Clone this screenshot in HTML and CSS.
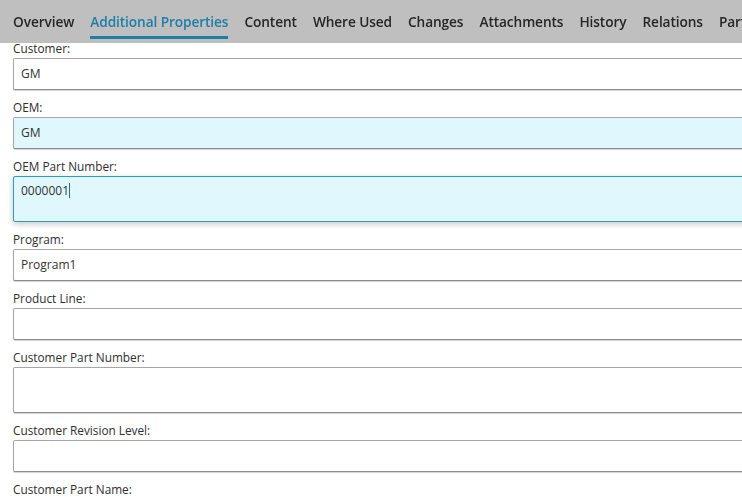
FILE: index.html
```html
<!DOCTYPE html>
<html>
<head>
<meta charset="utf-8">
<link rel="stylesheet" href="styles.css">
</head>
<body>
<nav class="tabs">
  <span class="tab">Overview</span>
  <span class="tab active">Additional Properties</span>
  <span class="tab">Content</span>
  <span class="tab">Where Used</span>
  <span class="tab">Changes</span>
  <span class="tab">Attachments</span>
  <span class="tab">History</span>
  <span class="tab">Relations</span>
  <span class="tab">Parts</span>
</nav>
<main class="form">
  <div class="field">
    <label class="label">Customer:</label>
    <div class="input">GM</div>
  </div>
  <div class="field">
    <label class="label">OEM:</label>
    <div class="input filled">GM</div>
  </div>
  <div class="field">
    <label class="label">OEM Part Number:</label>
    <div class="input area filled focused">0000001<span class="caret"></span></div>
  </div>
  <div class="field">
    <label class="label">Program:</label>
    <div class="input">Program1</div>
  </div>
  <div class="field">
    <label class="label">Product Line:</label>
    <div class="input"></div>
  </div>
  <div class="field">
    <label class="label">Customer Part Number:</label>
    <div class="input area"></div>
  </div>
  <div class="field">
    <label class="label">Customer Revision Level:</label>
    <div class="input"></div>
  </div>
  <div class="field">
    <label class="label">Customer Part Name:</label>
    <div class="input"></div>
  </div>
</main>
</body>
</html>
```
FILE: styles.css
```css
html, body {
  margin: 0;
  padding: 0;
  background: #ffffff;
  overflow: hidden;
  width: 742px;
  height: 497px;
}

body {
  font-family: "Open Sans", "Noto Sans", sans-serif;
  color: #333333;
}

.tabs {
  position: fixed;
  top: 0;
  left: 0;
  right: 0;
  height: 43px;
  background: #bfbfbf;
  display: flex;
  gap: 16px;
  padding-left: 13px;
  white-space: nowrap;
  z-index: 2;
}

.tab {
  font-size: 13.7px;
  font-weight: 600;
  color: #262626;
  line-height: 20px;
  padding-top: 12px;
  height: 24px;
  border-bottom: 3px solid transparent;
  letter-spacing: -0.1px;
}

.tab.active {
  color: #1d7fa6;
  border-bottom-color: #1d7fa6;
  height: 24px;
  padding-top: 12px;
}

.form {
  width: 900px;
  padding: 40px 0 0 13px;
  display: flex;
  flex-direction: column;
  gap: 9px;
}

.field {
  display: flex;
  flex-direction: column;
  gap: 2px;
}

.label {
  font-size: 11.8px;
  line-height: 16px;
  height: 16px;
  color: #2e2e2e;
}

.input {
  box-sizing: border-box;
  height: 32px;
  border: 1px solid #a6a6a6;
  border-bottom-color: #8c8c8c;
  border-radius: 2px;
  box-shadow: 0 1px 1px rgba(0,0,0,0.18);
  background: #ffffff;
  font-size: 12px;
  line-height: 30px;
  padding: 0 7px;
  color: #333333;
}

.input.area {
  height: 46px;
  line-height: 16px;
  padding-top: 6px;
}

.input.filled {
  background: #e0f8fd;
}

.input.focused {
  border-color: #2b9bcb;
  box-shadow: 0 2px 6px rgba(0,0,0,0.22);
}

.caret {
  display: inline-block;
  width: 1px;
  height: 15px;
  background: #1d6f9a;
  vertical-align: -3px;
}
```
